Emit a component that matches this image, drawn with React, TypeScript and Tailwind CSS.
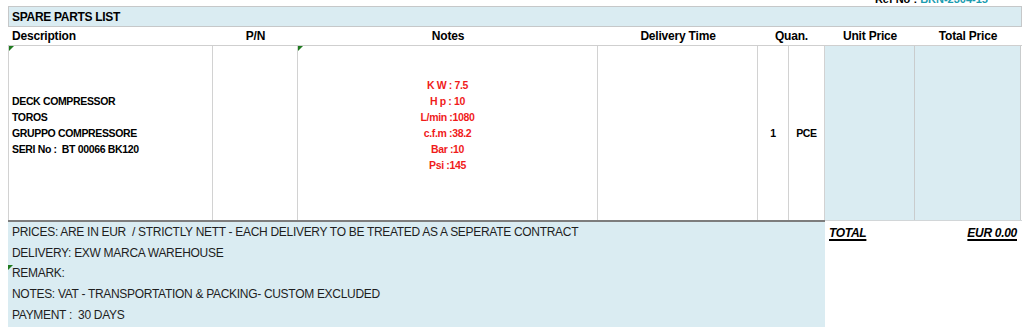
import React from "react";

const Tri = ({ className = "" }: { className?: string }) => (
  <span
    className={`absolute w-0 h-0 border-t-[5px] border-t-[#1f7a1f] border-r-[5px] border-r-transparent ${className}`}
  />
);

export default function App() {
  const font = { fontFamily: '"Liberation Sans", Arial, sans-serif' };
  const cols = "grid grid-cols-[205px_85px_300px_160px_31px_36px_90px_106px]";
  return (
    <div className="w-[1024px] h-[327px] bg-white overflow-hidden text-black" style={font}>
      {/* cut-off ref line */}
      <div className="h-[6px] overflow-hidden flex justify-end pr-[36px]">
        <div className="mt-[-7px] text-[11px] leading-[12px] font-bold whitespace-nowrap">
          <span>Ref No : </span>
          <span className="text-[#1b9cb0]">BKN-2304-15</span>
        </div>
      </div>
      <div className="ml-[8px] w-[1014px]">
        {/* title bar */}
        <div className="h-[21px] bg-[#daecf2] border border-[#c6c8c9] flex items-center pl-[3px] text-[12px] font-bold tracking-[-0.3px]">
          SPARE PARTS LIST
        </div>
        {/* header */}
        <div className={`${cols} h-[19px] border-b border-[#cfcfcf] items-center text-[12px] font-bold tracking-[-0.2px]`}>
          <div className="pl-[4px]">Description</div>
          <div className="text-center">P/N</div>
          <div className="text-center">Notes</div>
          <div className="text-center">Delivery Time</div>
          <div className="col-span-2 text-center">Quan.</div>
          <div className="text-center">Unit Price</div>
          <div className="text-center">Total Price</div>
        </div>
        {/* data row */}
        <div className={`${cols} h-[174px] text-[10.5px] font-bold leading-[16px] tracking-[-0.35px]`}>
          <div className="relative border-l border-r border-[#d2d2d2] flex flex-col justify-center pl-[3px] pb-[16px]">
            <Tri className="left-0 top-0" />
            <div>DECK COMPRESSOR</div>
            <div>TOROS</div>
            <div>GRUPPO COMPRESSORE</div>
            <div className="whitespace-pre">SERI No :  BT 00066 BK120</div>
          </div>
          <div className="border-r border-[#d2d2d2]" />
          <div className="relative border-r border-[#d2d2d2] flex flex-col justify-center items-center pb-[16px] text-[#f01b1b]">
            <Tri className="left-0 top-0" />
            <div>K W : 7.5</div>
            <div>H p : 10</div>
            <div>L/min :1080</div>
            <div>c.f.m :38.2</div>
            <div>Bar :10</div>
            <div>Psi :145</div>
          </div>
          <div className="border-r border-[#d2d2d2]" />
          <div className="border-r border-[#d2d2d2] flex items-center justify-center">1</div>
          <div className="border-r border-[#d2d2d2] flex items-center justify-center">PCE</div>
          <div className="bg-[#daecf2] border-r border-[#c9cccd]" />
          <div className="bg-[#daecf2] border-r border-[#c9cccd]" />
        </div>
        {/* bottom */}
        <div className="flex h-[107px]">
          <div className="relative w-[817px] bg-[#daecf2] border-t-2 border-[#7d7d7d] pl-[4px] text-[12px] leading-[20.7px] text-[#1e1e1e] tracking-[-0.3px] whitespace-pre">
            <div>PRICES: ARE IN EUR  / STRICTLY NETT - EACH DELIVERY TO BE TREATED AS A SEPERATE CONTRACT</div>
            <div>DELIVERY: EXW MARCA WAREHOUSE</div>
            <div className="relative">
              <Tri className="left-[-4px] top-[2px]" />
              REMARK:
            </div>
            <div>NOTES: VAT - TRANSPORTATION &amp; PACKING- CUSTOM EXCLUDED</div>
            <div>PAYMENT :  30 DAYS</div>
          </div>
          <div className="flex-1 border-t border-[#d2d6d8]">
            <div className="flex justify-between pl-[4px] pr-[5px] pt-[3px] text-[12px] font-bold italic tracking-[-0.3px]">
              <span className="underline decoration-[1.5px] underline-offset-[2px]">TOTAL</span>
              <span className="underline decoration-[1.5px] underline-offset-[2px]">EUR 0.00</span>
            </div>
          </div>
        </div>
      </div>
    </div>
  );
}
